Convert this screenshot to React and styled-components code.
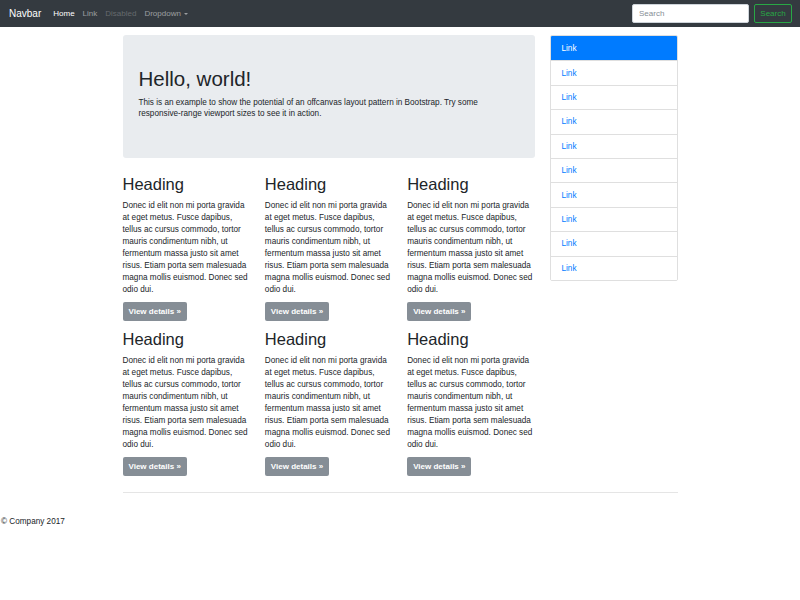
import React from 'react'
import styled, { createGlobalStyle } from 'styled-components'

const GlobalStyle = createGlobalStyle`
  body {
    margin: 0;
    font-family: "Liberation Sans", Arial, sans-serif;
    color: #212529;
    background: #fff;
  }
`

const cards = Array.from({ length: 6 })
const links = Array.from({ length: 10 })

function App() {
  return (
    <>
      <GlobalStyle />
      <Navbar>
        <Brand>Navbar</Brand>
        <NavLinks>
          <NavLink $state="active">Home</NavLink>
          <NavLink>Link</NavLink>
          <NavLink $state="disabled">Disabled</NavLink>
          <NavLink>
            Dropdown <Caret />
          </NavLink>
        </NavLinks>
        <SearchForm>
          <SearchInput placeholder="Search" />
          <SearchButton>Search</SearchButton>
        </SearchForm>
      </Navbar>

      <Container>
        <Row>
          <Main>
            <Jumbotron>
              <h1>Hello, world!</h1>
              <p>
                This is an example to show the potential of an offcanvas layout
                pattern in Bootstrap. Try some responsive-range viewport sizes to
                see it in action.
              </p>
            </Jumbotron>
            <Grid>
              {cards.map((_, i) => (
                <Card key={i}>
                  <h2>Heading</h2>
                  <p>
                    Donec id elit non mi porta gravida at eget metus. Fusce
                    dapibus, tellus ac cursus commodo, tortor mauris condimentum
                    nibh, ut fermentum massa justo sit amet risus. Etiam porta sem
                    malesuada magna mollis euismod. Donec sed odio dui.
                  </p>
                  <DetailsButton>View details &raquo;</DetailsButton>
                </Card>
              ))}
            </Grid>
          </Main>
          <Sidebar>
            {links.map((_, i) => (
              <ListItem key={i} $active={i === 0}>
                Link
              </ListItem>
            ))}
          </Sidebar>
        </Row>
        <Rule />
      </Container>

      <Footer>&copy; Company 2017</Footer>
    </>
  )
}

export default App

const Navbar = styled.nav`
  height: 27px;
  background: #343a40;
  display: flex;
  align-items: center;
  padding: 0 8px 0 9px;
`
const Brand = styled.a`
  color: #fff;
  font-size: 10px;
  margin-right: 8px;
`
const NavLinks = styled.div`
  display: flex;
  flex: 1;
`
const NavLink = styled.a`
  font-size: 8px;
  padding: 0 4px;
  display: flex;
  align-items: center;
  color: ${p =>
    p.$state === 'active'
      ? '#fff'
      : p.$state === 'disabled'
      ? 'rgba(255,255,255,0.25)'
      : 'rgba(255,255,255,0.5)'};
`
const Caret = styled.span`
  display: inline-block;
  margin-left: 3px;
  border-top: 2.5px solid currentColor;
  border-left: 2.5px solid transparent;
  border-right: 2.5px solid transparent;
`
const SearchForm = styled.form`
  display: flex;
  gap: 5px;
`
const SearchInput = styled.input`
  box-sizing: border-box;
  width: 117px;
  height: 19px;
  border: 1px solid #ced4da;
  border-radius: 2px;
  padding: 0 6px;
  font-family: inherit;
  font-size: 8px;
  &::placeholder {
    color: #868e96;
  }
`
const SearchButton = styled.button`
  box-sizing: border-box;
  width: 38px;
  height: 19px;
  border: 1px solid #28a745;
  border-radius: 2px;
  background: transparent;
  color: #28a745;
  font-family: inherit;
  font-size: 8px;
  padding: 0;
`
const Container = styled.div`
  width: 555px;
  margin: 0 auto;
  padding-top: 8px;
`
const Row = styled.div`
  display: flex;
  gap: 15px;
  align-items: flex-start;
`
const Main = styled.div`
  flex: 1;
  min-width: 0;
`
const Jumbotron = styled.div`
  background: #e9ecef;
  border-radius: 3px;
  height: 123px;
  box-sizing: border-box;
  padding: 32px 16px 0;
  h1 {
    font-size: 20.5px;
    font-weight: 500;
    line-height: 24px;
    margin: 0 0 6px;
  }
  p {
    font-size: 8.2px;
    line-height: 11px;
    margin: 0;
  }
`
const Grid = styled.div`
  display: grid;
  grid-template-columns: repeat(3, 1fr);
  column-gap: 15px;
  row-gap: 8px;
  margin-top: 16px;
`
const Card = styled.div`
  h2 {
    font-size: 16.5px;
    font-weight: 500;
    line-height: 19px;
    padding-top: 1px;
    margin: 0 0 6px;
  }
  p {
    font-size: 8.2px;
    line-height: 12px;
    margin: 0 0 6px;
  }
`
const DetailsButton = styled.a`
  display: flex;
  align-items: center;
  width: max-content;
  height: 19px;
  padding: 0 6px;
  background: #868e96;
  color: #fff;
  border-radius: 2px;
  font-size: 8px;
  font-weight: 700;
`
const Sidebar = styled.div`
  width: 128px;
  flex-shrink: 0;
  box-sizing: border-box;
  border: 1px solid rgba(0, 0, 0, 0.125);
  border-radius: 2px;
  overflow: hidden;
`
const ListItem = styled.a`
  display: flex;
  align-items: center;
  height: 24.4px;
  box-sizing: border-box;
  padding-left: 11px;
  font-size: 8.2px;
  color: ${p => (p.$active ? '#fff' : '#007bff')};
  background: ${p => (p.$active ? '#007bff' : '#fff')};
  & + & {
    border-top: 1px solid rgba(0, 0, 0, 0.125);
  }
`
const Rule = styled.hr`
  border: 0;
  border-top: 1px solid rgba(0, 0, 0, 0.1);
  margin: 16px 0 0;
`
const Footer = styled.p`
  font-size: 8.2px;
  line-height: 12px;
  margin: 23px 0 0 1px;
`
